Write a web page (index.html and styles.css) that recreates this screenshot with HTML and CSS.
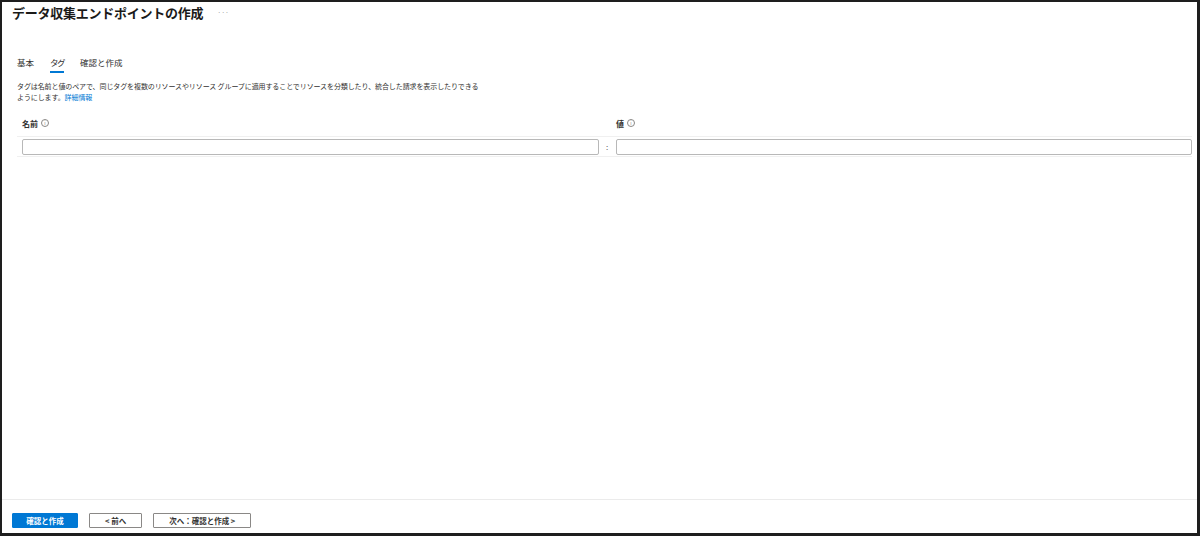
FILE: index.html
```html
<!DOCTYPE html>
<html lang="ja">
<head>
    <meta charset="UTF-8">
    <title>データ収集エンドポイントの作成</title>
    <link rel="stylesheet" href="styles.css">
</head>
<body>
    <div class="frame">
        <div class="main">
            <div class="header">
                <h1>データ収集エンドポイントの作成</h1>
                <span class="more">···</span>
            </div>

            <div class="tabs">
                <span class="tab">基本</span>
                <span class="tab active">タグ</span>
                <span class="tab">確認と作成</span>
            </div>

            <p class="desc">
                タグは名前と値のペアで、同じタグを複数のリソースやリソース グループに適用することでリソースを分類したり、統合した請求を表示したりできる<br>
                ようにします。<a href="#">詳細情報</a>
            </p>

            <div class="tag-grid">
                <div class="label">名前 <span class="info">i</span></div>
                <div></div>
                <div class="label">値 <span class="info">i</span></div>
            </div>
            <div class="tag-row">
                <input type="text" class="field">
                <span class="sep">:</span>
                <input type="text" class="field">
            </div>
        </div>

        <div class="footer">
            <button class="btn primary">確認と作成</button>
            <button class="btn">&lt; 前へ</button>
            <button class="btn">次へ：確認と作成 &gt;</button>
        </div>
    </div>
</body>
</html>
```

FILE: styles.css
```css
* {
    box-sizing: border-box;
}
body {
    margin: 0;
    font-family: "Noto Sans CJK JP", "Noto Sans", sans-serif;
    color: #323130;
    background-color: #fff;
}
.frame {
    width: 1200px;
    height: 536px;
    border: 2px solid #1e1e1e;
    border-right-width: 3px;
    border-bottom-width: 3px;
    display: flex;
    flex-direction: column;
}
.main {
    flex: 1;
    padding: 0 5px 0 15px;
}
.header {
    display: flex;
    align-items: center;
    margin-left: -5px;
    height: 20px;
}
h1 {
    margin: 0;
    font-size: 13px;
    font-weight: 600;
    letter-spacing: -0.25px;
    color: #1b1a19;
}
.more {
    margin-left: 14px;
    font-size: 7px;
    color: #a19f9d;
}
.tabs {
    display: flex;
    gap: 16px;
    margin-top: 34px;
    font-size: 8.5px;
}
.tab {
    padding-bottom: 3px;
    border-bottom: 2px solid transparent;
    color: #323130;
}
.tab.active {
    border-bottom-color: #0078d4;
    letter-spacing: -1.5px;
}
.desc {
    margin: 8px 0 0;
    font-size: 7px;
    line-height: 11px;
    letter-spacing: -0.1px;
}
.desc a {
    color: #0078d4;
    text-decoration: none;
}
.tag-grid {
    display: grid;
    grid-template-columns: 577px 17px 1fr;
    margin-top: 14px;
    padding-left: 5px;
    height: 19px;
}
.label {
    font-size: 8px;
    font-weight: 700;
    display: flex;
    align-items: center;
    gap: 3px;
    height: 12px;
}
.info {
    width: 8px;
    height: 8px;
    border: 1px solid #8a8886;
    border-radius: 50%;
    font-size: 5px;
    font-weight: 400;
    line-height: 6px;
    text-align: center;
    color: #8a8886;
}
.tag-row {
    display: flex;
    align-items: center;
    height: 21px;
    padding-left: 5px;
    border-top: 1px solid #f0f0f0;
    border-bottom: 1px solid #f0f0f0;
}
.field {
    height: 16px;
    flex: 1;
    border: 1px solid #b8b8b8;
    border-radius: 2px;
    padding: 0 4px;
}
.sep {
    width: 17px;
    text-align: center;
    font-size: 8px;
    color: #605e5c;
}
.footer {
    height: 34px;
    border-top: 1px solid #ebebeb;
    display: flex;
    align-items: flex-start;
    gap: 11px;
    padding: 13px 10px 0;
}
.btn {
    height: 15px;
    padding: 0 15px;
    font-family: inherit;
    font-size: 7.5px;
    font-weight: 600;
    background-color: #fff;
    color: #323130;
    border: 1px solid #8a8886;
    border-radius: 1px;
}
.btn.primary {
    width: 66px;
    padding: 0;
    background-color: #0078d4;
    border-color: #0078d4;
    color: #fff;
}
```
